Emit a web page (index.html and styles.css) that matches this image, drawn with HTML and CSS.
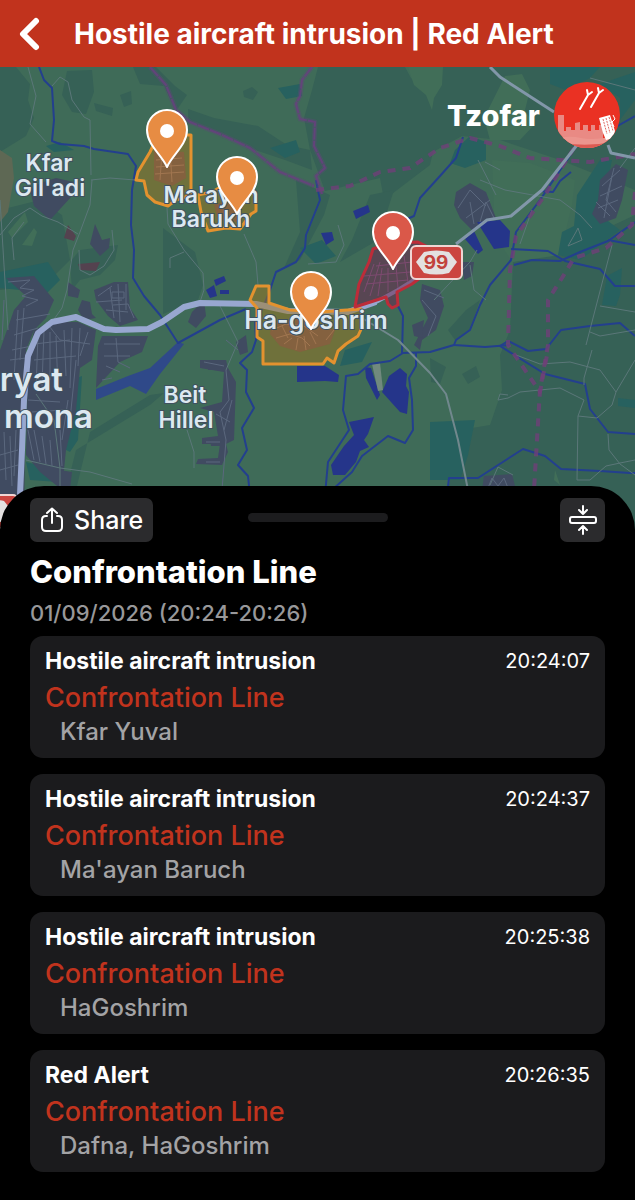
FILE: index.html
```html
<!DOCTYPE html>
<html lang="en">
<head>
    <meta charset="UTF-8">
    <meta name="viewport" content="width=device-width, initial-scale=1">
    <title>Red Alert</title>
    <link rel="stylesheet" href="styles.css">
</head>
<body>
    <header class="topbar">
        <a class="back" href="#" aria-label="Back">
            <svg width="22" height="34" viewBox="0 0 22 34"><path d="M18 4 L5 17 L18 30"/></svg>
        </a>
        <h1>Hostile aircraft intrusion | Red Alert</h1>
    </header>

    <section class="map" aria-label="Map">
        <svg class="map-canvas" viewBox="0 67 635 463" preserveAspectRatio="xMidYMin slice">
            <defs>
                <path id="pin" d="M0 0 C-5 -12 -20 -22 -20 -37 A20 20 0 0 1 20 -37 C20 -22 5 -12 0 0 Z"/>
            </defs>

            <!-- Land -->
            <g class="land-dark">
                <path d="M0 67 H16 L30 84 28 100 34 118 26 136 0 152Z"/>
                <path d="M67 71 L92 70 94 92 86 114 72 112 62 95Z"/>
                <path d="M120 95 L131 91 132 104 124 107Z M94 103 L113 108 112 116 96 111Z M243 91 L252 87 258 92 253 100 244 97Z"/>
                <path d="M133 67 H156 L175 86 187 95 176 111 164 86 140 84Z"/>
                <path d="M188 109 L214 118 258 126 287 145 310 150 312 170 285 160 255 150 205 128 188 122Z"/>
                <path d="M318 67 H405 L411 78 425 90 431 102 434 92 440 78 443 67 H635 V190 L560 160 500 140 462 136 433 152 430 165 384 200 380 178 325 191 310 150 304 118 312 90Z"/>
                <path d="M163 228 L195 252 203 285 198 300 163 314Z"/>
                <path d="M296 180 L330 195 324 215 300 260 284 268 300 232Z M370 195 L394 190 378 240 340 262 352 240Z"/>
                <path d="M0 210 L40 200 62 215 70 260 45 285 0 290Z M80 250 L118 245 115 260 100 275 80 280 72 290 70 262Z"/>
                <path d="M513 262 L560 250 635 215 V530 H440 L460 430 490 425 502 390 500 355 510 330Z"/>
                <path d="M466 310 L480 300 470 330 455 340 448 330Z M430 358 L446 367 440 384 431 382Z M462 374 L476 366 480 377 468 384Z"/>
                <path d="M76 450 L150 405 164 393 150 395 90 432 76 490 66 490Z"/>
            </g>
            <g class="land-light">
                <path d="M408 67 H443 L442 85 434 98 432 110 426 95 414 85Z"/>
                <path d="M484 118 L505 76 522 74 530 90 525 110 534 125 520 140 490 140Z"/>
                <path d="M492 160 L530 163 575 180 572 205 560 255 512 262 495 235Z"/>
                <path d="M8 232 L25 212 28 222 12 238Z M22 245 L34 228 37 232 32 246Z"/>
                <path d="M555 470 L560 485 554 480Z"/>
            </g>
            <g class="land-teal">
                <path d="M550 67 H600 L590 78 566 90 550 84Z M600 84 L635 72 V100 L620 120 620 98Z"/>
                <path d="M455 150 L470 136 486 142 486 160 465 168 450 163Z"/>
                <path d="M577 195 L600 160 612 160 600 215 620 230 580 260 558 255 562 232 574 226Z"/>
                <path d="M607 276 L622 268 620 295 616 306 602 305Z"/>
                <path d="M278 88 L300 84 302 96 286 99Z M270 148 L296 140 300 152 285 158Z M46 146 L60 142 74 150 54 152Z"/>
                <path d="M430 422 L475 420 468 455 460 480 430 480Z M618 398 L635 400 V408 L618 406Z"/>
                <path d="M0 272 L48 262 60 280 40 300 20 290 0 288Z M300 248 L322 240 336 256 316 264Z M345 350 L372 342 362 362 340 366Z"/>
                <path d="M66 382 L82 376 78 440 70 452 62 448Z M26 462 L60 470 58 482 30 480Z"/>
            </g>
            <path class="land-brown" d="M0 150 L12 158 14 178 8 212 0 222Z"/>

            <!-- Built-up areas -->
            <g class="urban">
                <path d="M40 183 L56 178 74 182 72 196 50 220 34 206 30 190Z"/>
                <path d="M95 224 L102 240 110 238 109 248 100 256 90 244Z M68 282 L80 290 78 298 68 296Z M82 300 L90 302 92 314 96 318 84 320 78 310Z"/>
                <path d="M6 278 L34 276 54 300 46 318 34 330 26 350 24 530 H0 V350 L14 310 26 296Z"/>
                <path d="M34 330 L50 322 78 322 96 330 92 360 80 368 76 410 66 450 62 490 40 472 26 455 28 360Z"/>
                <path d="M94 290 L114 282 128 282 130 308 138 320 120 326 108 316 96 300Z"/>
                <path d="M102 336 H148 L142 352 120 362 96 388 98 346Z"/>
                <path d="M192 312 L204 300 206 316 196 328 188 322Z"/>
                <path d="M200 360 H226 L228 368 236 382 234 440 226 444 228 452 222 465 196 464 198 459 218 458 220 444 202 444 202 438 218 436 214 412 200 408 222 402 224 372 200 368Z"/>
                <path d="M456 192 L470 183 486 192 496 218 482 226 474 232 460 218 454 205Z"/>
                <path d="M600 180 L616 164 628 170 622 200 616 218 600 224 592 214 598 200Z"/>
                <path d="M462 262 L474 262 472 276 464 280Z M422 284 L440 290 444 306 436 330 422 340 420 350 414 345 428 318 420 300Z"/>
                <path d="M60 470 L72 472 70 490 58 490Z M484 476 L512 474 516 490 482 490Z M412 325 L424 320 422 338 414 336Z"/>
                <path d="M208 360 h12 v10 h-12Z M236 342 L246 335 248 352 240 355Z M210 440 l10 -2 v8 l-9 0Z"/>
            </g>
            <g class="urban-red">
                <path d="M68 225 L76 236 74 241 64 238Z M78 264 L100 262 96 271 80 270Z"/>
            </g>

            <!-- Water -->
            <g class="water">
                <path d="M477 222 L500 220 510 231 509 247 494 249Z M465 239 L474 231 483 250 478 254Z"/>
                <path d="M353 211 L368 205 370 212 356 219Z M321 233 L332 232 334 240 326 245Z"/>
                <path d="M206 290 L214 285 217 296 210 298Z M214 280 L224 276 226 281 216 286Z M220 290 h9 v4 h-9Z"/>
                <path d="M297 366 H325 L339 375 338 382 325 381 297 382Z"/>
                <path d="M365 367 L371 368 380 395 377 400 366 378Z M400 368 L407 374 406 386 409 392 407 414 400 412 382 392 389 376Z"/>
                <path d="M349 422 L374 417 368 434 364 440 369 447 360 451 356 462 345 475 333 475 331 465 344 446 354 435Z"/>
            </g>
            <path class="water-soft" d="M96 389 L128 376 150 368 178 342 184 344 160 374 146 394 130 386 96 400Z"/>
            <path class="quarry" d="M372 364 L380 363 383 390 378 391Z"/>

            <!-- Streams -->
            <g class="stream">
                <path d="M39 67 L44 80 52 88 54 120 52 141 60 144 84 146 94 149 128 154 136 166 132 190 131 225 134 250 133 278 144 296 160 315 178 343 220 320 246 309"/>
                <path d="M316 180 L320 200 306 235 305 248 296 262 276 272 270 290 262 310 255 320 256 340 252 352 240 363 247 370 246 392 254 408 242 428 247 450 238 465 248 476 250 495"/>
                <path d="M463 137 L456 158 440 176 420 198 414 216 400 222"/>
                <path d="M577 145 L540 200 516 232 511 260 490 285 480 305 470 330 456 340 454 345 485 347 510 345"/>
                <path d="M540 191 L553 192 560 181 571 172 M511 249 L548 251 565 261 600 269 615 286 635 286"/>
                <path d="M635 222 L608 241 580 252 560 261 532 260 514 265"/>
                <path d="M608 240 L635 245 M614 128 L635 116"/>
                <path d="M635 336 L620 323 590 326 561 330 546 349 528 351 508 341 500 346 545 374 585 384 590 409 608 432 635 434"/>
                <path d="M454 345 L430 352 402 353 403 316 398 306 M403 353 L390 361 370 364 358 374 346 376 343 410 349 430 328 462 325 495 M332 490 L352 472 362 456 388 436 405 443 413 430 412 400 409 378 416 366 416 352"/>
                <path d="M447 495 L449 478 478 478 523 449 545 456 561 469 600 471 630 473 H635"/>
            </g>

            <!-- Minor roads -->
            <g class="road">
                <path d="M0 235 L14 218 30 208 42 216 58 222 78 234 M14 260 L12 238 24 222 M92 180 L90 205 80 232 73 250 67 290 62 308 52 322"/>
                <path d="M28 67 L36 96 30 124 46 142 M52 86 L60 77 68 82 72 100 84 117 90 120 91 175 M91 180 L110 178 135 180 M79 250 L80 270 90 275 104 266 114 250 112 230"/>
                <path d="M167 208 L168 224 184 250 203 273 204 290 200 302 M170 268 L170 258 184 252 M244 234 L256 262 258 285 M338 225 L344 245 336 262 308 264"/>
                <path d="M218 302 L238 342 226 370 M26 460 L60 468 90 472 132 484 M36 394 L54 420 60 468 60 490 M0 200 L8 330"/>
                <path d="M187 430 L194 452 194 468 M500 170 L485 162 M480 180 L505 190 560 200 580 215 592 228 M578 228 L582 240 568 246 576 232Z"/>
                <path d="M470 265 L474 290 486 300 M477 250 L470 262 448 285 434 300 M532 210 L520 244 M612 245 L586 345 M600 306 L635 312 M635 330 L600 336 590 332"/>
                <path d="M592 350 L584 378 584 385 M508 395 L500 394 498 400 508 398 520 392 560 388 584 400 578 416 577 480 590 480 606 466 620 463 635 460 M578 416 L597 418 612 405 616 392 635 360 M516 355 L540 364 570 362 600 370 616 392 M608 434 L609 450 620 464 635 475"/>
                <path d="M635 148 L620 168 M590 78 L635 90 M478 160 L496 195"/>
                <path d="M490 485 L498 467 513 475"/>
            </g>
            <g class="street">
                <path d="M8 282 L30 280 20 288 34 290 22 296 38 300 26 306 M16 320 L50 314 M14 335 L38 328 M12 350 L32 346 M10 360 L26 358 M4 300 L2 340 M18 310 L14 380 M24 308 L20 360"/>
                <path d="M38 334 L36 390 M44 330 L42 386 M50 332 L50 380 M56 336 L58 390 M64 330 L66 376 M72 328 L70 388 M80 328 L78 366 M88 332 L80 356 M34 344 L70 340 M34 360 L76 356 M34 378 L60 374 M46 322 L60 340 90 344"/>
                <path d="M4 432 L6 480 M10 436 L12 486 M16 430 L14 476 M28 430 L34 460 M34 430 L40 462 M42 436 L46 464 M50 440 L52 466 M60 430 L62 466 M68 400 L62 440 M76 360 L70 420 M28 400 L60 402 M32 412 L64 410 M0 455 L18 450 M0 470 L18 465"/>
                <path d="M98 296 L112 286 M96 302 L122 300 M106 310 L128 312 M110 288 L114 318 M118 284 L120 322 M126 284 V310 M112 292 H124 V298 H112Z M113 305 L128 304 134 318 M104 344 L140 344 M116 338 L118 362 130 368 M104 356 L130 356 M106 366 L120 372 M112 378 L102 380"/>
                <path d="M204 362 L224 366 M226 340 L238 350 M226 370 L229 400 220 412 226 440 222 490 M232 400 L224 430 M206 442 H220 M206 462 H220 M216 414 L230 422"/>
                <path d="M458 208 L470 190 486 206 M466 218 L490 200 M474 224 L470 202 M480 222 L486 202 494 218"/>
                <path d="M602 186 L620 170 M600 196 L622 186 M598 208 L618 200 M604 218 L612 176 M596 202 L610 216 M614 168 L606 200 616 212 M488 488 L492 478 498 486 504 478 508 488"/>
                <path d="M422 300 L436 316 428 336 M424 290 L444 298"/>
            </g>

            <!-- Borders -->
            <path class="border-halo" d="M150 67 L166 85 176 110 190 122 220 134 250 148 280 172 314 186"/>
            <path class="border-solid" d="M150 67 L166 85 176 110 190 122 220 134 250 148 280 172 314 186"/>
            <path class="border-halo" d="M312 67 L302 80 300 96 296 104 300 119 315 122 314 146 325 168 316 176 322 194"/>
            <path class="border-solid" d="M312 67 L302 80 300 96 296 104 300 119 315 122 314 146 325 168 316 176 322 194"/>
            <path class="border-line" d="M316 190 L350 186 380 172 410 168 440 148 470 138 500 146 530 158 590 162 635 154"/>
            <path class="border-line" d="M574 148 L545 195 516 236 510 270 508 345 540 392 548 350"/>
            <path class="border-line" d="M635 192 L632 225 606 248 574 258 562 278 548 300 548 345 540 390 534 490"/>

            <!-- Highways -->
            <path class="road-mid" d="M490 67 L500 77 554 112 M608 145 L611 153 635 158 M577 145 L542 190 511 216 487 220 456 244"/>
            <path class="road-mid thin" d="M362 318 L398 340 430 373 446 394 458 440 468 490"/>
            <path class="highway" d="M20 495 L22 450 24 400 28 356 38 333 52 322 76 317 104 329 116 330 148 329 162 322 184 307 200 303 256 304 288 311 348 312 376 302"/>
            <path class="highway narrow" d="M348 312 L376 302 398 290 430 270"/>

            <!-- Alert areas -->
            <g class="zone">
                <path d="M191 135 L191 195 176 200 168 206 155 202 147 195 144 181 136 180 138 172 150 152 158 135Z"/>
                <path d="M198 195 L212 192 222 186 250 186 256 197 256 211 251 214 240 229 226 228 208 231 201 212Z"/>
                <path d="M250 300 L256 286 269 286 269 303 290 310 320 312 361 309 363 325 358 336 346 344 338 351 334 363 327 358 323 364 263 364 263 341 257 337 257 308Z"/>
            </g>
            <path class="zone-red" d="M355 307 L359 284 369 262 373 249 390 243 418 242 434 250 436 266 412 284 397 292 398 305 392 308 388 304 386 297Z"/>
            <path class="zone-town" d="M154 150 L184 152 186 178 172 186 154 180Z M272 322 L305 318 335 330 330 344 300 352 280 346 270 334Z M214 204 L246 200 236 222 218 220Z"/>
            <g class="zone-street">
                <path d="M156 160 L182 158 M156 167 L184 165 M155 174 L184 172 M170 150 L172 182 M162 152 L160 180"/>
                <path d="M272 330 L286 324 304 326 318 336 M276 338 L290 334 302 338 310 346 M284 344 L292 338 M296 350 L298 338 M306 350 L304 336 M316 344 L310 332 M282 326 L288 338 M326 340 L334 330"/>
            </g>
            <g class="zone-street red">
                <path d="M364 292 L374 264 M370 296 L380 262 M378 296 L382 268 M388 292 L388 268 M398 288 L396 266 M408 282 L404 256 M364 276 L410 272 M366 284 L408 280 M376 266 L412 262"/>
            </g>

            <!-- Road shields -->
            <g>
                <rect class="shield" x="411" y="246" width="51" height="33" rx="5"/>
                <path class="shield-in" d="M424 252 Q436 249 449 252 L457 262 L449 273 Q436 276 424 273 L416 262Z"/>
                <text class="shield-no" x="436" y="269">99</text>
                <rect class="shield" x="-34" y="495" width="51" height="33" rx="4"/>
                <path class="shield-in" d="M-20 501 Q-9 498 4 501 L12 511 L4 522 H-20Z"/>
            </g>

            <!-- Place names -->
            <g class="place">
                <text x="49" y="171">Kfar</text>
                <text x="50" y="196">Gil'adi</text>
                <text x="211" y="203">Ma'ayan</text>
                <text x="211" y="227">Barukh</text>
                <text x="185" y="403">Beit</text>
                <text x="186" y="428">Hillel</text>
            </g>
            <text class="place town" x="316" y="329">Ha-goshrim</text>
            <text class="place city" x="63" y="391">ryat</text>
            <text class="place city" x="93" y="428">mona</text>

            <!-- Pins -->
            <g class="pin" transform="translate(167 167)"><use href="#pin"/><circle cy="-36" r="7"/></g>
            <g class="pin" transform="translate(237 214)"><use href="#pin"/><circle cy="-36" r="7"/></g>
            <g class="pin" transform="translate(311 329)"><use href="#pin"/><circle cy="-36" r="7"/></g>
            <g class="pin pin-red" transform="translate(393 269)"><use href="#pin"/><circle cy="-36" r="7"/></g>
        </svg>

        <div class="brand">
            <span>Tzofar</span>
            <svg width="66" height="66" viewBox="0 0 66 66">
                <defs><clipPath id="disc"><circle cx="33" cy="33" r="33"/></clipPath></defs>
                <g clip-path="url(#disc)">
                    <rect width="66" height="66" fill="#ea3123"/>
                    <path fill="#e98a84" d="M4 66 V33 H10 V49 H12 V45 H17 V48 H21 V41 L26 40 V48 H29 V43 H34 V49 H37 V43 H41 V48 H45 V43 H49 V66Z"/>
                    <path fill="#ec958e" d="M0 57 Q14 53 27 56 T66 53 V60 Q34 66 0 60Z"/>
                    <path fill="#dc5a52" d="M8 61 Q34 65 58 60 L50 66 H16Z"/>
                    <path fill="#fff" d="M45 36 L56 33 61 49 59 56 52 58 49 51Z"/>
                    <path fill="none" stroke="#dd6a62" stroke-dasharray="2 1" d="M49 37 L53 52 M52 36 L56 51 M55 35 L59 49"/>
                    <path fill="none" stroke="#fff" d="M60 45 L58 40 61 37 59 33"/>
                    <path fill="none" stroke="#fff" stroke-width="2" stroke-linecap="round" d="M26 27 L34 13 M34 13 L33 8 M34 13 L38 10 M37 25 L45 11 M45 11 L44 6 M45 11 L49 8"/>
                </g>
            </svg>
        </div>
    </section>

    <main class="sheet">
        <div class="toolbar">
            <button class="btn share" type="button">
                <svg width="24" height="26" viewBox="0 0 24 26"><path d="M7 9 H6 Q2 9 2 13 V20 Q2 24 6 24 H18 Q22 24 22 20 V13 Q22 9 18 9 H17 M12 16 V2 M7 6 L12 1.5 L17 6"/></svg>
                Share
            </button>
            <span class="handle"></span>
            <button class="btn collapse" type="button" aria-label="Collapse">
                <svg width="30" height="30" viewBox="0 0 30 30"><rect x="2" y="12" width="26" height="6" rx="2"/><path d="M15 1 V9 M11 5 L15 9 L19 5 M15 29 V21 M11 25 L15 21 L19 25"/></svg>
            </button>
        </div>

        <h2>Confrontation Line</h2>
        <p class="date">01/09/2026 (20:24-20:26)</p>

        <ul class="alerts">
            <li class="card">
                <div class="card-head"><h3>Hostile aircraft intrusion</h3><time>20:24:07</time></div>
                <p class="region">Confrontation Line</p>
                <p class="towns">Kfar Yuval</p>
            </li>
            <li class="card">
                <div class="card-head"><h3>Hostile aircraft intrusion</h3><time>20:24:37</time></div>
                <p class="region">Confrontation Line</p>
                <p class="towns">Ma'ayan Baruch</p>
            </li>
            <li class="card">
                <div class="card-head"><h3>Hostile aircraft intrusion</h3><time>20:25:38</time></div>
                <p class="region">Confrontation Line</p>
                <p class="towns">HaGoshrim</p>
            </li>
            <li class="card">
                <div class="card-head"><h3>Red Alert</h3><time>20:26:35</time></div>
                <p class="region">Confrontation Line</p>
                <p class="towns">Dafna, HaGoshrim</p>
            </li>
        </ul>
    </main>
</body>
</html>
```
FILE: styles.css
```css
* {
    margin: 0;
    padding: 0;
    box-sizing: border-box;
}

body {
    background: #000;
    color: #fff;
    font-family: Inter, "Liberation Sans", sans-serif;
}

/* Top bar */
.topbar {
    display: flex;
    align-items: center;
    gap: 34px;
    height: 67px;
    padding: 0 18px;
    background: #c1331d;
}

.back {
    display: flex;
}

.back path {
    fill: none;
    stroke: #fff;
    stroke-width: 6;
    stroke-linecap: round;
    stroke-linejoin: round;
}

.topbar h1 {
    font-size: 28px;
    font-weight: 700;
    line-height: 32px;
    white-space: nowrap;
}

/* Map */
.map {
    position: relative;
    height: 463px;
    background: #3f6b58;
    overflow: hidden;
}

.map-canvas {
    display: block;
    width: 100%;
    height: 100%;
}

.land-dark { fill: #366156; }
.land-light { fill: #416e58; }
.land-teal { fill: #27615f; }
.land-brown { fill: #5e6854; }
.urban { fill: #404b61; }
.urban-red { fill: #54424f; }
.water { fill: #25358a; }
.water-soft { fill: #2f4989; }
.quarry { fill: #71897e; }

.stream,
.road,
.street,
.border-halo,
.border-solid,
.border-line,
.road-mid,
.highway {
    fill: none;
    stroke-linejoin: round;
}

.stream { stroke: #233f8e; stroke-width: 2; }
.road { stroke: #5b7779; stroke-width: 1; }
.street { stroke: #5b687e; stroke-width: 1; }
.border-halo { stroke: #62457c; stroke-width: 5; opacity: .35; }
.border-solid { stroke: #693f80; stroke-width: 2; stroke-dasharray: 12 1; opacity: .8; }
.border-line { stroke: #6f4078; stroke-width: 4; stroke-dasharray: 8 7; opacity: .8; }
.road-mid { stroke: #8297a9; stroke-width: 3; }
.road-mid.thin { stroke: #71888d; stroke-width: 2; }
.highway { stroke: #98a7d0; stroke-width: 6; }
.highway.narrow { stroke-width: 4; }

.zone {
    fill: rgba(160, 120, 30, .5);
    stroke: #e3922f;
    stroke-width: 3;
    stroke-linejoin: round;
}

.zone-red {
    fill: rgba(110, 40, 80, .55);
    stroke: #bd2c39;
    stroke-width: 3;
    stroke-linejoin: round;
}

.zone-town { fill: #84613f; }

.zone-street {
    fill: none;
    stroke: #a17650;
    stroke-width: 1;
}

.zone-street.red { stroke: #7d4a70; }

.shield {
    fill: #cb4540;
    stroke: #f0d5d3;
    stroke-width: 2;
}

.shield-in { fill: #e3e0e0; }

.shield-no {
    fill: #c2423c;
    font-size: 19px;
    font-weight: 700;
    text-anchor: middle;
}

.place {
    fill: #dce8f0;
    stroke: #40505f;
    stroke-width: 2;
    paint-order: stroke;
    font-size: 23px;
    font-weight: 600;
    text-anchor: middle;
}

.place.town { font-size: 25px; }

.place.city {
    font-size: 33px;
    text-anchor: end;
}

.pin {
    fill: #e78c43;
    stroke: #fff;
    stroke-width: 2;
    stroke-linejoin: round;
}

.pin-red { fill: #da5849; }

.pin circle {
    fill: #fff;
    stroke: none;
}

.brand {
    position: absolute;
    top: 15px;
    right: 15px;
    display: flex;
    align-items: center;
    gap: 14px;
    font-size: 29px;
    font-weight: 800;
}

/* Bottom sheet */
.sheet {
    position: relative;
    margin-top: -44px;
    padding: 12px 30px 28px;
    background: #000;
    border-radius: 44px 44px 0 0;
}

.toolbar {
    display: grid;
    grid-template-columns: 1fr auto 1fr;
    align-items: center;
}

.btn {
    display: flex;
    align-items: center;
    justify-content: center;
    height: 44px;
    border: 0;
    border-radius: 7px;
    background: #2b2b2d;
    color: #fff;
    font: 500 25px Inter, "Liberation Sans", sans-serif;
}

.btn svg {
    fill: none;
    stroke: #fff;
    stroke-width: 2;
    stroke-linecap: round;
    stroke-linejoin: round;
}

.share {
    justify-self: start;
    gap: 10px;
    padding: 0 10px;
}

.collapse {
    justify-self: end;
    width: 45px;
}

.handle {
    width: 140px;
    height: 9px;
    margin-bottom: 6px;
    border-radius: 5px;
    background: #1c1c1e;
}

.sheet h2 {
    margin-top: 12px;
    font-size: 31px;
    font-weight: 800;
    line-height: 36px;
}

.date {
    margin: 8px 0;
    color: #98989a;
    font-size: 22px;
    font-weight: 500;
    line-height: 30px;
}

.alerts {
    display: flex;
    flex-direction: column;
    gap: 16px;
    list-style: none;
}

.card {
    padding: 10px 15px 14px;
    border-radius: 13px;
    background: #1b1b1d;
}

.card-head {
    display: flex;
    justify-content: space-between;
    line-height: 30px;
}

.card h3 {
    font-size: 23px;
    font-weight: 700;
}

.card time {
    font-size: 20px;
}

.region {
    color: #c1331d;
    font-size: 27px;
    font-weight: 500;
    line-height: 44px;
}

.towns {
    padding-left: 15px;
    color: #a3a3a5;
    font-size: 24px;
    font-weight: 500;
    line-height: 24px;
}
```
